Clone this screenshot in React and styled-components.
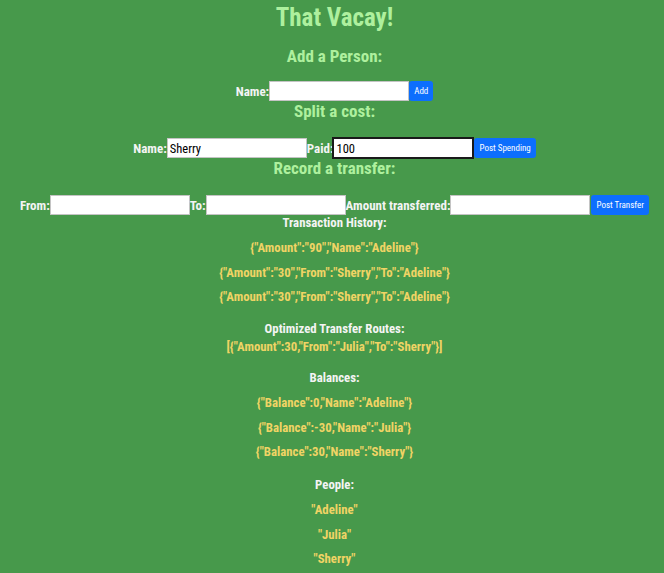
import React, { useState } from 'react';
import styled, { createGlobalStyle } from 'styled-components';

const GlobalStyle = createGlobalStyle`
    body {
        margin: 0;
        background-color: #47994b;
        font-family: Roboto, "DejaVu Sans Condensed", sans-serif;
        font-stretch: condensed;
    }
`;

const Page = styled.div`
    display: flex;
    flex-direction: column;
    align-items: center;
    padding: 4px 0 0 5px;
    text-align: center;
`;

const Title = styled.h1`
    margin: 0;
    font-size: 25px;
    line-height: 28px;
    font-weight: 700;
    color: #aef09e;
`;

const Heading = styled.h3`
    margin: ${(p) => p.$top || 0}px 0 0;
    font-size: 17px;
    line-height: 20px;
    font-weight: 700;
    color: #aef09e;
`;

const Form = styled.div`
    display: flex;
    align-items: center;
    margin-top: ${(p) => p.$top || 17}px;
    height: 20px;
`;

const Label = styled.label`
    font-size: 13px;
    font-weight: 700;
    color: #f4f4f4;
    white-space: nowrap;
`;

const TextInput = styled.input`
    box-sizing: border-box;
    width: 140px;
    height: 20px;
    margin: 0;
    padding: 0 2px;
    border: 1px solid ${(p) => (p.$focused ? '#1a1a1a' : '#c4c4c4')};
    outline: ${(p) => (p.$focused ? '1px solid #1a1a1a' : 'none')};
    background: #fff;
    font-family: inherit;
    font-stretch: condensed;
    font-size: 12.5px;
    font-weight: 400;
    color: #000;
`;

const Button = styled.button`
    height: 20px;
    padding: 0 5px;
    margin-left: ${(p) => p.$gap || 0}px;
    border: none;
    border-radius: 3px;
    background-color: #0d6efd;
    color: #fff;
    font-family: inherit;
    font-stretch: condensed;
    font-size: 9px;
    white-space: nowrap;
    cursor: pointer;
`;

const SmallHeading = styled.h4`
    margin: ${(p) => p.$top || 0}px 0 0;
    font-size: 12.8px;
    line-height: 16px;
    font-weight: 700;
    color: #f4f4f4;
`;

const List = styled.div`
    display: flex;
    flex-direction: column;
    gap: 8.5px;
    margin-top: ${(p) => p.$top || 0}px;
`;

const Item = styled.p`
    margin: 0;
    font-size: 12.8px;
    line-height: 16px;
    font-weight: 700;
    color: #f0d465;
`;

const history = [
    { Amount: '90', Name: 'Adeline' },
    { Amount: '30', From: 'Sherry', To: 'Adeline' },
    { Amount: '30', From: 'Sherry', To: 'Adeline' },
];

const routes = [{ Amount: 30, From: 'Julia', To: 'Sherry' }];

const balances = [
    { Balance: 0, Name: 'Adeline' },
    { Balance: -30, Name: 'Julia' },
    { Balance: 30, Name: 'Sherry' },
];

const people = ['Adeline', 'Julia', 'Sherry'];

function App() {
    const [person, setPerson] = useState('');
    const [spender, setSpender] = useState('Sherry');
    const [paid, setPaid] = useState('100');
    const [from, setFrom] = useState('');
    const [to, setTo] = useState('');
    const [amount, setAmount] = useState('');

    return (
        <Page>
            <GlobalStyle />
            <Title>That Vacay!</Title>

            <Heading $top={14}>Add a Person:</Heading>
            <Form $top={15}>
                <Label>Name:</Label>
                <TextInput value={person} onChange={(e) => setPerson(e.target.value)} />
                <Button>Add</Button>
            </Form>

            <Heading>Split a cost:</Heading>
            <Form>
                <Label>Name:</Label>
                <TextInput value={spender} onChange={(e) => setSpender(e.target.value)} />
                <Label>Paid:</Label>
                <TextInput $focused value={paid} onChange={(e) => setPaid(e.target.value)} />
                <Button $gap={1}>Post Spending</Button>
            </Form>

            <Heading>Record a transfer:</Heading>
            <Form>
                <Label>From:</Label>
                <TextInput value={from} onChange={(e) => setFrom(e.target.value)} />
                <Label>To:</Label>
                <TextInput value={to} onChange={(e) => setTo(e.target.value)} />
                <Label>Amount transferred:</Label>
                <TextInput value={amount} onChange={(e) => setAmount(e.target.value)} />
                <Button $gap={1}>Post Transfer</Button>
            </Form>

            <SmallHeading>Transaction History:</SmallHeading>
            <List $top={9}>
                {history.map((h, i) => (
                    <Item key={i}>{JSON.stringify(h)}</Item>
                ))}
            </List>

            <SmallHeading $top={16}>Optimized Transfer Routes:</SmallHeading>
            <List $top={2}>
                <Item>{JSON.stringify(routes)}</Item>
            </List>

            <SmallHeading $top={15}>Balances:</SmallHeading>
            <List $top={9}>
                {balances.map((b, i) => (
                    <Item key={i}>{JSON.stringify(b)}</Item>
                ))}
            </List>

            <SmallHeading $top={17}>People:</SmallHeading>
            <List $top={9}>
                {people.map((p) => (
                    <Item key={p}>{JSON.stringify(p)}</Item>
                ))}
            </List>
        </Page>
    );
}

export default App;
